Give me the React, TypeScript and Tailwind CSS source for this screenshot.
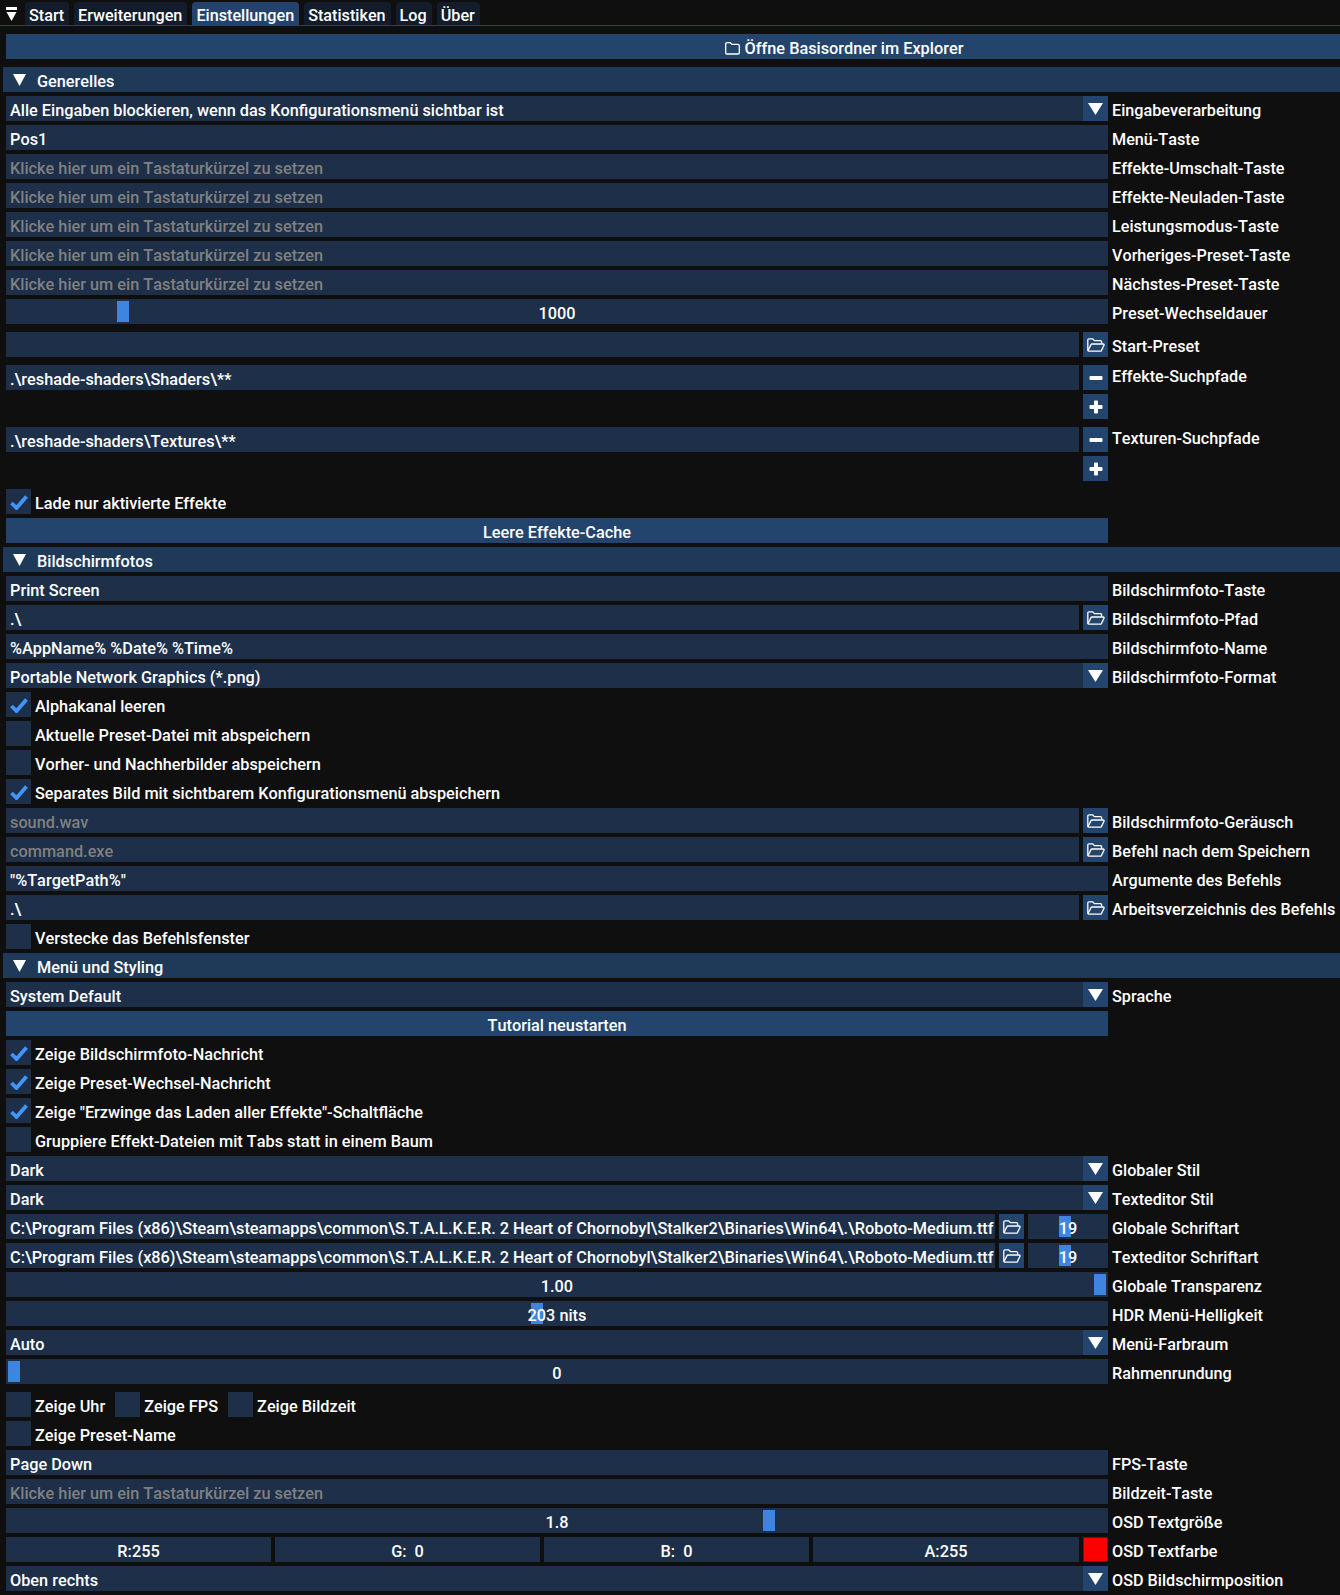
import React from "react";

const FRAME = "bg-[#1d2f49]";
const BTN = "bg-[#23456d]";

function Row({ label, children, className = "", labelUp }: { label?: string; children: React.ReactNode; className?: string; labelUp?: boolean }) {
  return (
    <div className={`flex h-[25px] leading-[29px] ${className}`}>
      <div className="flex w-[1102px] shrink-0 gap-1">{children}</div>
      {label && <div className={`ml-1 text-[16.2px] whitespace-nowrap ${labelUp ? "leading-[24px]" : ""}`}>{label}</div>}
    </div>
  );
}

function Field({ text, muted, center, className = "flex-1" }: { text?: string; muted?: boolean; center?: boolean; className?: string }) {
  return (
    <div className={`${FRAME} min-w-0 overflow-hidden px-1 whitespace-pre ${className} ${muted ? "text-[#808080]" : ""} ${center ? "text-center" : ""}`}>
      {text}
    </div>
  );
}

function OpenFolderIcon() {
  return (
    <svg width="18" height="14" viewBox="0 0 18 14" fill="none" stroke="#fff" strokeWidth="1.3" strokeLinejoin="round">
      <path d="M0.8 12.6V2a1.2 1.2 0 0 1 1.2-1.2h3.6l1.8 1.8h6a1.2 1.2 0 0 1 1.2 1.2v1.6" />
      <path d="M0.9 12.7L4 6.6a1.2 1.2 0 0 1 1-.6h11.2a.9 .9 0 0 1 .8 1.3l-2.6 5.3a1.2 1.2 0 0 1-1 .6H2a1.1 1.1 0 0 1-1.1-.5z" />
    </svg>
  );
}

function ClosedFolderIcon() {
  return (
    <svg width="15" height="13" viewBox="0 0 15 13" fill="none" stroke="#fff" strokeWidth="1.3" strokeLinejoin="round">
      <path d="M.7 2a1.3 1.3 0 0 1 1.3-1.3h3.2l1.7 1.7h6.1a1.3 1.3 0 0 1 1.3 1.3v7A1.3 1.3 0 0 1 13 12H2A1.3 1.3 0 0 1 .7 10.7z" />
    </svg>
  );
}

function Folder() {
  return (
    <div className={`${BTN} flex w-[25px] shrink-0 items-center justify-center`}>
      <OpenFolderIcon />
    </div>
  );
}

function Tri({ w = 13, className = "" }: { w?: number; className?: string }) {
  return (
    <svg width={w} height="12" viewBox={`0 0 ${w} 12`} className={className}>
      <polygon points={`0,0 ${w},0 ${w / 2},12`} fill="#fff" />
    </svg>
  );
}

function Combo({ label, text }: { label: string; text: string }) {
  return (
    <Row label={label}>
      <div className={`${FRAME} flex flex-1 justify-between`}>
        <span className="px-1">{text}</span>
        <span className={`${BTN} flex w-[25px] items-start justify-center pt-[7px]`}>
          <Tri w={15} />
        </span>
      </div>
    </Row>
  );
}

function Key({ label, text }: { label: string; text?: string }) {
  return (
    <Row label={label}>
      <Field text={text ?? "Klicke hier um ein Tastaturkürzel zu setzen"} muted={!text} />
    </Row>
  );
}

function Path({ label, text, muted, className }: { label: string; text: string; muted?: boolean; className?: string }) {
  return (
    <Row label={label} className={className}>
      <Field text={text} muted={muted} />
      <Folder />
    </Row>
  );
}

function Slider({ label, text, grab }: { label: string; text: string; grab: number }) {
  return (
    <Row label={label}>
      <div className={`${FRAME} relative flex-1 text-center`}>
        <div className="absolute top-[2px] h-[21px] w-[12px] bg-[#3d85e0]" style={{ left: grab }} />
        <span className="relative">{text}</span>
      </div>
    </Row>
  );
}

function Check({ label, on }: { label: string; on?: boolean }) {
  return (
    <div className="flex h-[25px] leading-[29px]">
      <div className={`${FRAME} flex h-[25px] w-[25px] shrink-0 items-start justify-center`}>
        {on && (
          <svg width="18" height="15" viewBox="0 0 18 15" className="mt-[6px]">
            <polyline points="1.5,8 6.5,13 16.5,1.5" fill="none" stroke="#4296fa" strokeWidth="3.8" />
          </svg>
        )}
      </div>
      <div className="ml-1 whitespace-nowrap">{label}</div>
    </div>
  );
}

function Btn({ text, full }: { text: React.ReactNode; full?: boolean }) {
  return (
    <div className={`h-[25px] ${BTN} text-center leading-[29px] ${full ? "pl-[342px]" : "w-[1102px]"}`}>{text}</div>
  );
}

function Head({ text }: { text: string }) {
  return (
    <div className="-ml-[3px] flex h-[25px] items-start bg-[#1f3958] leading-[29px]">
      <Tri className="mt-[7px] ml-[10px]" />
      <span className="ml-[11px]">{text}</span>
    </div>
  );
}

function PlusMinus({ plus }: { plus?: boolean }) {
  return (
    <div className={`${BTN} flex w-[25px] shrink-0 items-center justify-center`}>
      <svg width="14" height="14" viewBox="0 0 14 14">
        <rect x="0.5" y="5" width="13" height="4" fill="#fff" rx="1" />
        {plus && <rect x="5" y="0.5" width="4" height="13" fill="#fff" rx="1" />}
      </svg>
    </div>
  );
}

function Tab({ text, active }: { text: string; active?: boolean }) {
  return (
    <div className={`h-[23px] rounded-t-[4px] pr-[5px] pl-1 text-[16.2px] leading-[27px] ${active ? "bg-[#23436d]" : "bg-[#121c2b]"}`}>{text}</div>
  );
}

function FontRow({ label }: { label: string }) {
  return (
    <Row label={label}>
      <Field text="C:\Program Files (x86)\Steam\steamapps\common\S.T.A.L.K.E.R. 2 Heart of Chornobyl\Stalker2\Binaries\Win64\.\Roboto-Medium.ttf" />
      <Folder />
      <div className={`${FRAME} relative w-[80px] shrink-0 text-center`}>
        <div className="absolute top-[2px] left-[31px] h-[21px] w-[12px] bg-[#3d85e0]" />
        <span className="relative">19</span>
      </div>
    </Row>
  );
}

export default function App() {
  return (
    <div className="h-[1595px] w-[1340px] overflow-hidden bg-[#0f0f0f] text-[16.3px] font-medium text-white [font-family:Roboto,sans-serif] [font-kerning:none]">
      <div className="relative flex h-[26px] gap-[5px] border-b border-[#23436d] pt-[2px] pl-[25px]">
        <svg width="11" height="14" viewBox="0 0 11 14" className="absolute top-[7px] left-[6px]">
          <rect x="0" y="0" width="11" height="3" fill="#fff" />
          <polygon points="0.5,5 10.5,5 5.5,14" fill="#fff" />
        </svg>
        <Tab text="Start" />
        <Tab text="Erweiterungen" />
        <Tab text="Einstellungen" active />
        <Tab text="Statistiken" />
        <Tab text="Log" />
        <Tab text="Über" />
      </div>
      <div className="flex flex-col gap-1 pt-2 pl-[6px]">
        <Btn
          full
          text={
            <span className="inline-flex items-center gap-[5px]">
              <ClosedFolderIcon />
              Öffne Basisordner im Explorer
            </span>
          }
        />
        <div className="mt-1" />
      </div>
      <div className="flex flex-col gap-1 pl-[6px]">
        <Head text="Generelles" />
        <Combo label="Eingabeverarbeitung" text="Alle Eingaben blockieren, wenn das Konfigurationsmenü sichtbar ist" />
        <Key label="Menü-Taste" text="Pos1" />
        <Key label="Effekte-Umschalt-Taste" />
        <Key label="Effekte-Neuladen-Taste" />
        <Key label="Leistungsmodus-Taste" />
        <Key label="Vorheriges-Preset-Taste" />
        <Key label="Nächstes-Preset-Taste" />
        <Slider label="Preset-Wechseldauer" text="1000" grab={111} />
        <Path className="mt-1" label="Start-Preset" text="" />
        <Row className="mt-1" label="Effekte-Suchpfade" labelUp>
          <Field text=".\reshade-shaders\Shaders\**" />
          <PlusMinus />
        </Row>
        <Row>
          <div className="flex-1" />
          <PlusMinus plus />
        </Row>
        <Row className="mt-1" label="Texturen-Suchpfade" labelUp>
          <Field text=".\reshade-shaders\Textures\**" />
          <PlusMinus />
        </Row>
        <Row>
          <div className="flex-1" />
          <PlusMinus plus />
        </Row>
        <div className="mt-1">
          <Check label="Lade nur aktivierte Effekte" on />
        </div>
        <Btn text="Leere Effekte-Cache" />
        <Head text="Bildschirmfotos" />
        <Key label="Bildschirmfoto-Taste" text="Print Screen" />
        <Path label="Bildschirmfoto-Pfad" text=".\" />
        <Key label="Bildschirmfoto-Name" text="%AppName% %Date% %Time%" />
        <Combo label="Bildschirmfoto-Format" text="Portable Network Graphics (*.png)" />
        <Check label="Alphakanal leeren" on />
        <Check label="Aktuelle Preset-Datei mit abspeichern" />
        <Check label="Vorher- und Nachherbilder abspeichern" />
        <Check label="Separates Bild mit sichtbarem Konfigurationsmenü abspeichern" on />
        <Path label="Bildschirmfoto-Geräusch" text="sound.wav" muted />
        <Path label="Befehl nach dem Speichern" text="command.exe" muted />
        <Key label="Argumente des Befehls" text={'"%TargetPath%"'} />
        <Path label="Arbeitsverzeichnis des Befehls" text=".\" />
        <Check label="Verstecke das Befehlsfenster" />
        <Head text="Menü und Styling" />
        <Combo label="Sprache" text="System Default" />
        <Btn text="Tutorial neustarten" />
        <Check label="Zeige Bildschirmfoto-Nachricht" on />
        <Check label="Zeige Preset-Wechsel-Nachricht" on />
        <Check label={'Zeige "Erzwinge das Laden aller Effekte"-Schaltfläche'} on />
        <Check label="Gruppiere Effekt-Dateien mit Tabs statt in einem Baum" />
        <Combo label="Globaler Stil" text="Dark" />
        <Combo label="Texteditor Stil" text="Dark" />
        <FontRow label="Globale Schriftart" />
        <FontRow label="Texteditor Schriftart" />
        <Slider label="Globale Transparenz" text="1.00" grab={1088} />
        <Slider label="HDR Menü-Helligkeit" text="203 nits" grab={525} />
        <Combo label="Menü-Farbraum" text="Auto" />
        <Slider label="Rahmenrundung" text="0" grab={2} />
        <div className="mt-1 flex gap-[10px]">
          <Check label="Zeige Uhr" />
          <Check label="Zeige FPS" />
          <Check label="Zeige Bildzeit" />
        </div>
        <Check label="Zeige Preset-Name" />
        <Key label="FPS-Taste" text="Page Down" />
        <Key label="Bildzeit-Taste" />
        <Slider label="OSD Textgröße" text="1.8" grab={757} />
        <Row label="OSD Textfarbe">
          <Field text="R:255" center className="w-[265px] shrink-0" />
          <Field text="G:  0" center className="w-[265px] shrink-0" />
          <Field text="B:  0" center className="w-[265px] shrink-0" />
          <Field text="A:255" center />
          <div className="w-[25px] shrink-0 border border-[#1d2f49] bg-[#ff0000]" />
        </Row>
        <Combo label="OSD Bildschirmposition" text="Oben rechts" />
      </div>
    </div>
  );
}
